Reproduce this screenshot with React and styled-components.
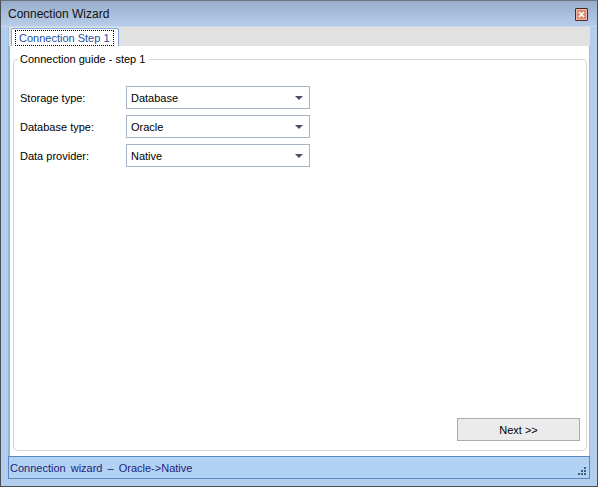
import styled, { createGlobalStyle } from "styled-components";

const Global = createGlobalStyle`
  html, body { margin: 0; padding: 0; background: #fff; }
  body { font-family: "Liberation Sans", Arial, sans-serif; }
`;

const Window = styled.div`
  box-sizing: border-box;
  width: 598px;
  height: 487px;
  display: flex;
  flex-direction: column;
  border: 1px solid #4a4f57;
  border-top-color: #6b7480;
  background: #b3cdec;
`;

const TitleBar = styled.div`
  height: 25px;
  flex: none;
  display: flex;
  align-items: center;
  justify-content: space-between;
  padding: 0 9px 0 7px;
  background: linear-gradient(to bottom, #99aecb, #b6cce8);
  font-size: 12px;
  color: #111;
`;

const CloseBox = styled.div`
  width: 11px;
  height: 11px;
  border: 1px solid #4c2a22;
  border-radius: 1px;
  background: #d98a74;
  box-shadow: inset 0 0 0 1px #f1b9a6;
  display: flex;
  align-items: center;
  justify-content: center;
  margin-top: 2px;
`;

const Body = styled.div`
  flex: 1;
  display: flex;
  flex-direction: column;
  padding: 0 7px 7px 7px;
  border-top: 1px solid #c9daf0;
`;

const TabStrip = styled.div`
  height: 19px;
  flex: none;
  display: flex;
  align-items: flex-end;
  background: #e1e1e1;
  padding-left: 2px;
  border-left: 1px solid #a6c2e4;
`;

const Tab = styled.div`
  height: 18px;
  padding: 0 4px 0 3px;
  display: flex;
  align-items: center;
  background: #fff;
  border: 1px solid #7fa6d8;
  border-bottom: none;
  border-radius: 2px 2px 0 0;
  color: #1d4fa0;
  font-size: 11px;
  margin-bottom: -1px;
`;

const Focus = styled.span`
  border: 1px dotted #000;
  padding: 0 3px;
  line-height: 14px;
`;

const Panel = styled.div`
  flex: 1;
  background: #fff;
  border-left: 2px solid #92b4dd;
  border-right: 1px solid #9bbbe0;
  padding: 7px 2px 5px 3px;
  display: flex;
`;

const Group = styled.fieldset`
  flex: 1;
  margin: 0;
  border: 1px solid #d6d6d6;
  border-radius: 4px;
  padding: 21px 6px 9px 6px;
  display: flex;
  flex-direction: column;
`;

const Legend = styled.legend`
  font-size: 11px;
  color: #000;
  padding: 0 4px 0 2px;
  margin-left: -2px;
`;

const Rows = styled.div`
  display: grid;
  grid-template-columns: 106px 184px;
  row-gap: 6px;
`;

const Label = styled.div`
  font-size: 11px;
  display: flex;
  align-items: center;
  color: #000;
`;

const Combo = styled.div`
  box-sizing: border-box;
  height: 23px;
  border: 1px solid #a8b5c5;
  display: flex;
  align-items: center;
  justify-content: space-between;
  padding: 0 6px 0 4px;
  font-size: 11px;
`;

const Arrow = styled.span`
  width: 0;
  height: 0;
  border-left: 4px solid transparent;
  border-right: 4px solid transparent;
  border-top: 4px solid #465163;
  margin-top: 1px;
`;

const Footer = styled.div`
  margin-top: auto;
  display: flex;
  justify-content: flex-end;
`;

const Button = styled.button`
  width: 123px;
  height: 23px;
  border: 1px solid #acacac;
  background: #ebebeb;
  font-family: inherit;
  font-size: 11px;
  color: #000;
  padding: 0;
`;

const StatusBar = styled.div`
  height: 21px;
  flex: none;
  display: flex;
  align-items: center;
  justify-content: space-between;
  background: #b2d2f4;
  border: 1px solid #5a88c2;
  padding: 0 2px 0 1px;
  font-size: 11px;
  color: #22227a;
  word-spacing: 2px;
`;

const Grip = () => (
  <svg width="10" height="10" viewBox="0 0 10 10" style={{ alignSelf: "flex-end", marginBottom: 2 }}>
    {[
      [7, 1],
      [4, 4],
      [7, 4],
      [1, 7],
      [4, 7],
      [7, 7],
    ].map(([x, y]) => (
      <rect key={`${x}-${y}`} x={x} y={y} width="2" height="2" fill="#3f5f85" />
    ))}
  </svg>
);

const fields = [
  ["Storage type:", "Database"],
  ["Database type:", "Oracle"],
  ["Data provider:", "Native"],
];

export default function App() {
  return (
    <>
      <Global />
      <Window>
        <TitleBar>
          <span>Connection Wizard</span>
          <CloseBox>
            <svg width="7" height="7" viewBox="0 0 7 7">
              <path d="M1 1 L6 6 M6 1 L1 6" stroke="#fff" strokeWidth="1.6" />
            </svg>
          </CloseBox>
        </TitleBar>
        <Body>
          <TabStrip>
            <Tab>
              <Focus>Connection Step 1</Focus>
            </Tab>
          </TabStrip>
          <Panel>
            <Group>
              <Legend>Connection guide - step 1</Legend>
              <Rows>
                {fields.map(([label, value]) => (
                  <>
                    <Label key={label}>{label}</Label>
                    <Combo key={value}>
                      <span>{value}</span>
                      <Arrow />
                    </Combo>
                  </>
                ))}
              </Rows>
              <Footer>
                <Button>Next &gt;&gt;</Button>
              </Footer>
            </Group>
          </Panel>
          <StatusBar>
            <span>Connection wizard – Oracle-&gt;Native</span>
            <Grip />
          </StatusBar>
        </Body>
      </Window>
    </>
  );
}
